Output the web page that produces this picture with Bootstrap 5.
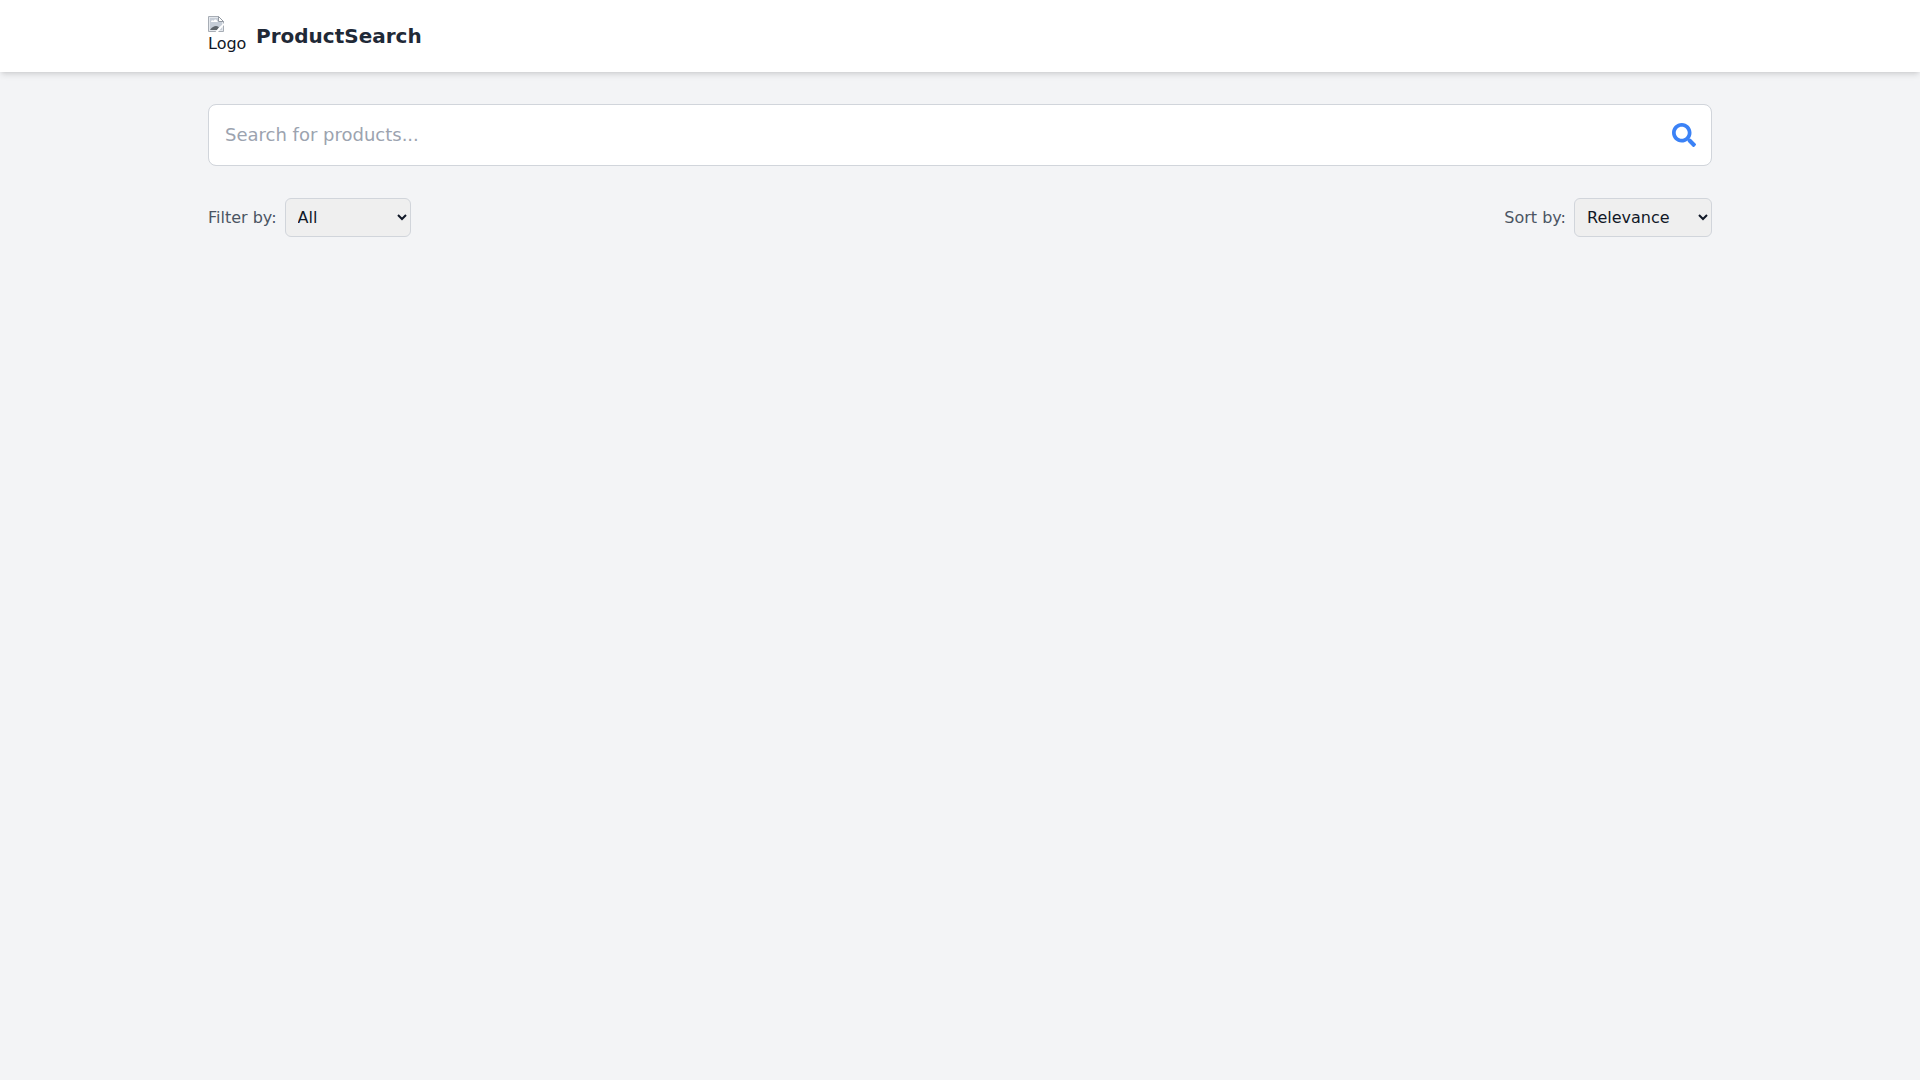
<!DOCTYPE html>
<html lang="en">
<head>
<meta charset="utf-8">
<meta name="viewport" content="width=device-width, initial-scale=1">
<title>ProductSearch</title>
<link href="https://cdn.jsdelivr.net/npm/bootstrap@5.3.0/dist/css/bootstrap.min.css" rel="stylesheet">
<style>
  body { background: #f3f4f6; color: #1f2937; font-family: "DejaVu Sans", sans-serif; }
  .page-width { max-width: 1536px; padding-left: 16px; padding-right: 16px; }
  .site-header { box-shadow: 0 4px 6px -1px rgba(0,0,0,.1), 0 2px 4px -2px rgba(0,0,0,.1); }
  .brand-logo { width: 40px; height: 40px; line-height: 24px; color: #111827; }
  .brand-logo svg { display: block; }
  .brand-name { font-size: 20px; line-height: 28px; color: #1f2937; }
  .search-box { height: 62px; padding: 15px 16px 17px; font-size: 18px; line-height: 28px; border-color: #d1d5db; border-radius: 8px; }
  .search-box::placeholder { color: #9ca3af; }
  .search-btn { right: 16px; color: #3b82f6; line-height: 0; }
  .choice-label { color: #4b5563; }
  .choice { height: 39px; padding: 8px; background: #efefef; border: 1px solid #d1d5db; border-radius: 6px; color: #111827; }
  .choice-filter { width: 126px; }
  .choice-sort { width: 138px; }
</style>
</head>
<body>
<header class="site-header bg-white">
  <div class="container-fluid page-width d-flex align-items-center gap-2 py-3">
    <div class="brand-logo">
      <svg width="16" height="16" viewBox="0 0 16 16" aria-hidden="true">
        <path d="M.5.5h10l5 5v10H.5z" fill="#e4e8ed" stroke="#a7adb5"/>
        <path d="M2 2h8v4h4v8H2z" fill="#c6cdd7"/>
        <path d="M3 6c0-2 2-2 2.500-1C6 3 9 3 9 5c1 0 1 1 .5 1z" fill="#fff"/>
        <path d="M2 14c2-3 4-4 6-4 2 0 3 1 3 2l-2 2z" fill="#5f656b"/>
        <path d="M10.500.5v5h5z" fill="#fff" stroke="#9299a2"/>
        <path d="M16 7v2l-6 7H7.500l3-4z" fill="#fff"/>
      </svg>
      <span class="d-block">Logo</span>
    </div>
    <h1 class="brand-name fw-bold mb-0">ProductSearch</h1>
  </div>
</header>
<main class="container-fluid page-width py-4">
  <form class="position-relative d-flex align-items-center mt-2 mb-4 pb-2" role="search">
    <input type="text" class="form-control search-box" placeholder="Search for products..." aria-label="Search for products">
    <button type="button" class="search-btn btn border-0 p-0 position-absolute" aria-label="Search">
      <svg width="24" height="24" viewBox="0 0 512 512" fill="currentColor" aria-hidden="true"><path d="M505 442.700L405.300 343c-4.500-4.500-10.600-7-17-7H372c27.600-35.300 44-79.700 44-128C416 93.100 322.900 0 208 0S0 93.100 0 208s93.100 208 208 208c48.300 0 92.700-16.400 128-44v16.300c0 6.400 2.500 12.500 7 17l99.700 99.700c9.400 9.400 24.600 9.400 33.900 0l28.300-28.300c9.400-9.400 9.400-24.600.1-34zM208 336c-70.700 0-128-57.200-128-128 0-70.700 57.200-128 128-128 70.700 0 128 57.200 128 128 0 70.700-57.200 128-128 128z"/></svg>
    </button>
  </form>
  <div class="d-flex justify-content-between align-items-center">
    <div class="d-flex align-items-center gap-2">
      <label class="choice-label" for="filter">Filter by:</label>
      <select class="choice choice-filter" id="filter">
        <option>All</option>
        <option>Category 1</option>
        <option>Category 2</option>
      </select>
    </div>
    <div class="d-flex align-items-center gap-2">
      <label class="choice-label" for="sort">Sort by:</label>
      <select class="choice choice-sort" id="sort">
        <option>Relevance</option>
        <option>Price: Low</option>
        <option>Price: High</option>
      </select>
    </div>
  </div>
</main>
<script src="https://cdn.jsdelivr.net/npm/bootstrap@5.3.0/dist/js/bootstrap.bundle.min.js"></script>
</body>
</html>
